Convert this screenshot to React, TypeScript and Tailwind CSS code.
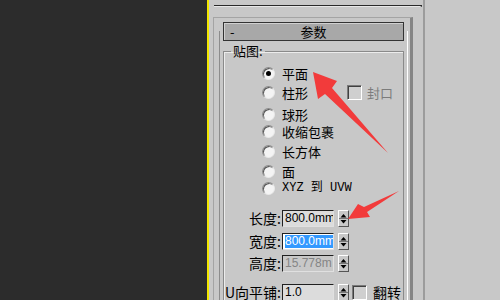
import React from "react";

const cjk = { fontFamily: '"Noto Sans CJK SC", "Noto Sans", sans-serif' };
const num = { fontFamily: '"Liberation Sans", Arial, sans-serif' };

function Radio({ checked }: { checked?: boolean }) {
  return (
    <div className="w-[13px] h-[13px] rounded-full bg-[#f4f4f4] border border-[#8a8a8a] border-r-[#e8e8e8] border-b-[#e8e8e8] shadow-[inset_1px_1px_0_#555] flex items-center justify-center shrink-0">
      {checked && <div className="w-[5px] h-[5px] rounded-full bg-black" />}
    </div>
  );
}

function Check() {
  return (
    <div className="w-[15px] h-[15px] bg-[#cfcfcf] border border-[#7a7a7a] border-r-white border-b-white shadow-[inset_1px_1px_0_#404040] shrink-0" />
  );
}

function Spinner() {
  return (
    <div className="w-[11px] h-[17px] flex flex-col bg-[#c8c8c8] border border-white border-r-[#555] border-b-[#555] shrink-0">
      <svg width="9" height="15" viewBox="0 0 9 15">
        <path d="M4.5 3 L7.5 6.5 L1.5 6.5 Z" fill="#000" />
        <line x1="0" y1="7.5" x2="9" y2="7.5" stroke="#777" strokeWidth="1" />
        <path d="M1.5 9 L7.5 9 L4.5 12.5 Z" fill="#000" />
      </svg>
    </div>
  );
}

function Row({
  label,
  value,
  kind,
  className,
  clip,
  extra,
}: {
  label: string;
  value: string;
  kind: "normal" | "selected" | "disabled";
  className: string;
  clip?: boolean;
  extra?: React.ReactNode;
}) {
  const fill = kind === "normal" ? "bg-[#dcdcdc]" : kind === "selected" ? "bg-white" : "bg-[#c8c8c8]";
  return (
    <div className={`flex items-center h-[17px] ${className}`}>
      <div className={`w-[57px] flex justify-end ${clip ? "overflow-hidden" : ""}`}>
        <span className="text-[14px] leading-[17px] text-black whitespace-nowrap shrink-0" style={cjk}>
          {label}
        </span>
      </div>
      <div
        className={`ml-[1px] w-[52px] h-[17px] overflow-hidden border border-[#202020] border-r-[#e0e0e0] border-b-[#e0e0e0] ${fill} flex items-center pl-[2px]`}
      >
        <span
          className={`text-[12px] leading-[13px] whitespace-nowrap ${
            kind === "selected" ? "bg-[#3399ff] text-white pr-[4px]" : kind === "disabled" ? "text-[#858585]" : "text-black"
          }`}
          style={num}
        >
          {value}
        </span>
      </div>
      <div className="ml-[4px]">
        <Spinner />
      </div>
      {extra}
    </div>
  );
}

export default function App() {
  return (
    <div className="relative flex w-[500px] h-[300px] overflow-hidden bg-[#c8c8c8]" style={cjk}>
      {/* dark viewport */}
      <div className="w-[207px] bg-[#2c2c2c]" />
      <div className="w-[2px] bg-[#f2e600]" />

      {/* command panel */}
      <div className="w-[216px] border-r-2 border-[#9c9c9c] flex flex-col">
        <div className="ml-[5px] mt-[5px] w-[208px] h-[3px] bg-[#5a5a5a] border-t border-[#2a2a2a] border-b border-b-[#e8e8e8] border-r-2 border-r-[#2a2a2a]" />

        {/* rollout frame */}
        <div className="mt-[10px] ml-[4px] w-[200px] flex-1 border-l border-t border-[#a4a4a4] border-r-[3px] border-r-[#858585] pt-[4px]">
          <div className="ml-[9px] w-[181px] h-[19px] bg-[#a8a8a8] border border-[#333] shadow-[inset_1px_1px_0_#d0d0d0] flex items-center relative">
            <span className="absolute left-[6px] top-[0px] text-[13px] leading-[17px] text-black">-</span>
            <span className="w-full text-center text-[13px] leading-[17px] text-black">参数</span>
          </div>

          <div className="-mt-[10px] ml-[5px] w-[189px] h-[300px] border-l border-[#8c8c8c] border-r border-r-white pt-[12px]">
            <fieldset className="ml-[3px] w-[181px] h-[300px] border border-[#8a8a8a] shadow-[inset_1px_1px_0_#ececec]">
              <legend className="ml-[7px] px-[2px] text-[13px] leading-[16px] text-black">贴图:</legend>

              <div className="pl-[38px] flex flex-col text-[13px] leading-[15px] text-black">
                <div className="flex items-center h-[17px] mt-[6px]">
                  <Radio checked />
                  <span className="ml-[7px]">平面</span>
                </div>
                <div className="flex items-center h-[17px] mt-[2px]">
                  <Radio />
                  <span className="ml-[7px] w-[65px]">柱形</span>
                  <Check />
                  <span className="ml-[5px] text-[#7c7c7c]">封口</span>
                </div>
                <div className="flex items-center h-[17px] mt-[5px]">
                  <Radio />
                  <span className="ml-[7px]">球形</span>
                </div>
                <div className="flex items-center h-[17px]">
                  <Radio />
                  <span className="ml-[7px]">收缩包裹</span>
                </div>
                <div className="flex items-center h-[17px] mt-[3px]">
                  <Radio />
                  <span className="ml-[7px]">长方体</span>
                </div>
                <div className="flex items-center h-[17px] mt-[3px]">
                  <Radio />
                  <span className="ml-[7px]">面</span>
                </div>
                <div className="flex items-center h-[17px]">
                  <Radio />
                  <span
                    className="ml-[7px] text-[12px] whitespace-pre"
                    style={{ fontFamily: '"Liberation Mono", "Noto Sans CJK SC", monospace' }}
                  >
                    XYZ 到 UVW
                  </span>
                </div>
              </div>

              <div className="flex flex-col">
                <Row label="长度:" value="800.0mm" kind="normal" className="mt-[13px]" />
                <Row label="宽度:" value="800.0mm" kind="selected" className="mt-[6px]" />
                <Row label="高度:" value="15.778m" kind="disabled" className="mt-[5px]" />
                <Row
                  label="U向平铺:"
                  value="1.0"
                  kind="normal"
                  className="mt-[12px]"
                  clip
                  extra={
                    <>
                      <div className="ml-[3px]">
                        <Check />
                      </div>
                      <span className="ml-[6px] text-[14px] leading-[17px] text-black">翻转</span>
                    </>
                  }
                />
              </div>
            </fieldset>
          </div>
        </div>
      </div>

      <div className="flex-1" />

      {/* red annotation arrows */}
      <svg className="absolute inset-0 pointer-events-none" width="500" height="300" viewBox="0 0 500 300">
        <polygon points="313,72 337,81 332,88 388,153 325,94 318,99" fill="#f23b3b" />
        <polygon points="348,219 358,204 364,207 399,191 367,212 370,217" fill="#f23b3b" />
      </svg>
    </div>
  );
}
